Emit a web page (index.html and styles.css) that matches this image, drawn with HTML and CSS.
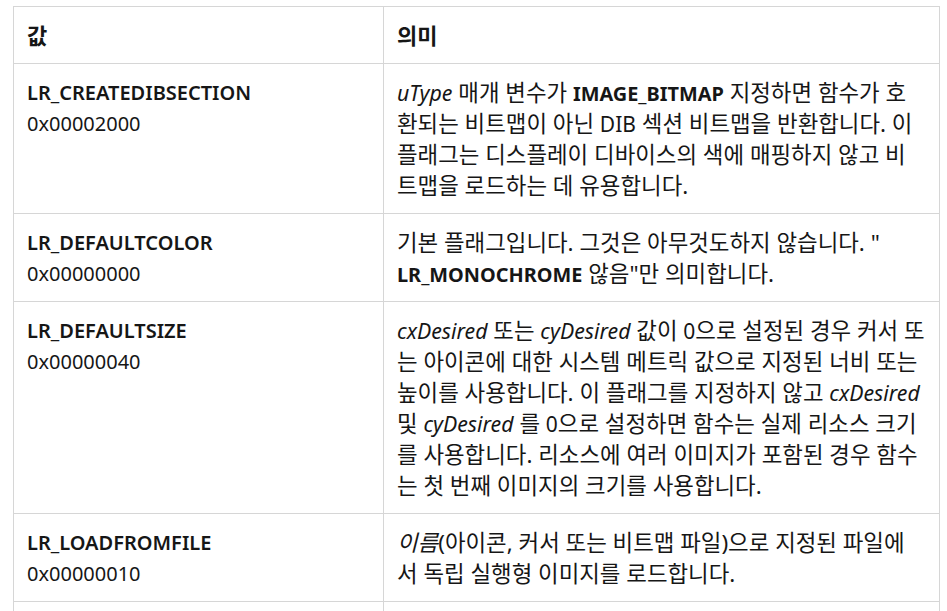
FILE: index.html
```html
<!DOCTYPE html>
<html lang="ko">
<head>
<meta charset="utf-8">
<link rel="stylesheet" href="styles.css">
</head>
<body>
<table class="flags">
  <thead>
    <tr><th class="col-val">값</th><th>의미</th></tr>
  </thead>
  <tbody>
    <tr>
      <td><div class="name">LR_CREATEDIBSECTION</div><div>0x00002000</div></td>
      <td class="desc"><em>uType</em> 매개 변수가 <strong>IMAGE_BITMAP</strong> 지정하면 함수가 호<br>환되는 비트맵이 아닌 <span class="lat">DIB</span> 섹션 비트맵을 반환합니다. 이 플래그는 디스플레이 디바이스의 색에 매핑하지 않고 비<br>트맵을 로드하는 데 유용합니다.</td>
    </tr>
    <tr>
      <td><div class="name">LR_DEFAULTCOLOR</div><div>0x00000000</div></td>
      <td class="desc">기본 플래그입니다. 그것은 아무것도하지 않습니다. "<wbr><strong>LR_MONOCHROME</strong> 않음"만 의미합니다.</td>
    </tr>
    <tr>
      <td><div class="name">LR_DEFAULTSIZE</div><div>0x00000040</div></td>
      <td class="desc"><em>cxDesired</em> 또는 <em>cyDesired</em> 값이 <span class="lat">0</span>으로 설정된 경우 커서 또는 아이콘에 대한 시스템 메트릭 값으로 지정된 너비 또는 높이를 사용합니다. 이 플래그를 지정하지 않고 <em>cxDesired</em> 및 <em>cyDesired</em> 를 <span class="lat">0</span>으로 설정하면 함수는 실제 리소스 크기를 사용합니다. 리소스에 여러 이미지가 포함된 경우 함수는 첫 번째 이미지의 크기를 사용합니다.</td>
    </tr>
    <tr>
      <td><div class="name">LR_LOADFROMFILE</div><div>0x00000010</div></td>
      <td class="desc"><em class="ko">이름</em>(아이콘, 커서 또는 비트맵 파일)으로 지정된 파일에<br>서 독립 실행형 이미지를 로드합니다.</td>
    </tr>
    <tr>
      <td><div class="name">LR_LOADMAP3DCOLORS</div><div>0x00001000</div></td>
      <td class="desc">색 테이블에서 회색 음영을 검색하고 다음 회색 음영을 해당 <span class="lat">3D</span> 색으로 바꿉니다.</td>
    </tr>
  </tbody>
</table>
</body>
</html>
```
FILE: styles.css
```css
html, body {
  margin: 0;
  background: #ffffff;
}
body {
  padding: 6px 7px 0 13px;
  font-family: "Noto Sans", "Noto Sans CJK KR", sans-serif;
  font-size: 20px;
  line-height: 31px;
  color: #161616;
}
.flags {
  width: 927px;
  border-collapse: collapse;
  table-layout: fixed;
}
.flags th,
.flags td {
  border: 1px solid #d6d6d6;
  padding: 13px 11px 12px 13px;
  text-align: left;
  vertical-align: top;
}
.flags th {
  font-size: 22px;
  font-weight: 700;
}
.col-val {
  width: 345px;
}
.name {
  font-weight: 600;
}
.desc {
  font-size: 22.4px;
}
.desc em {
  font-size: 21.3px;
  line-height: 20px;
}
.desc strong {
  font-size: 19.9px;
  line-height: 20px;
}
.desc .lat {
  font-size: 21px;
  line-height: 20px;
}
.desc em.ko {
  font-size: 22.4px;
}
.flags em {
  font-style: italic;
}
.flags strong {
  font-weight: 700;
}
```
